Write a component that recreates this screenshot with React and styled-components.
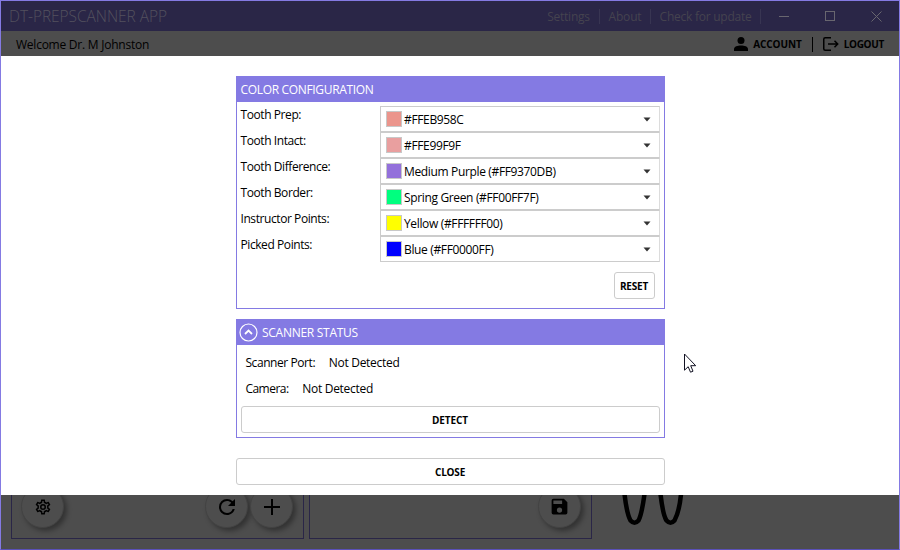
import React from "react";
import styled, { createGlobalStyle } from "styled-components";

const GlobalStyle = createGlobalStyle`
  * { box-sizing: border-box; }
  body { margin: 0; background: #fff; font-family: "Open Sans", "Noto Sans", sans-serif; font-size: 12px; color: #000; }
  svg { display: block; flex: none; }
`;

const Window = styled.div`
  position: relative;
  width: 900px;
  height: 550px;
  overflow: hidden;
  display: flex;
  flex-direction: column;
  border: 1px solid #847ae3;
  border-bottom-color: #5a50b8;
  background: #4d4d4d;
`;

const Label = styled.span`
  display: block;
  white-space: nowrap;
  line-height: 18px;
  letter-spacing: ${(p) => p.$ls || 0}px;
`;

const TitleBar = styled.header`
  flex: none;
  height: 30px;
  display: flex;
  align-items: center;
  background: #2a2647;
  color: #45434f;
`;

const AppTitle = styled.h1`
  margin: 0 auto 0 8px;
  font-weight: 300;
  font-size: 15.5px;
  line-height: 30px;
  letter-spacing: -0.05px;
  color: #53515e;
  white-space: nowrap;
`;

const TitleLink = styled.span`
  width: ${(p) => p.$w}px;
  height: 15px;
  line-height: 15px;
  text-align: center;
  border-right: 1px solid #383552;
  white-space: nowrap;
  letter-spacing: ${(p) => p.$ls}px;
`;

const WindowControls = styled.div`
  width: 138px;
  display: flex;
`;

const WindowControl = styled.span`
  width: 46px;
  display: flex;
  justify-content: center;
`;

const UserBar = styled.div`
  flex: none;
  height: 25px;
  display: flex;
  align-items: center;
  padding: 2px 15px 0;
`;

const UserName = styled(Label)`
  margin-right: auto;
`;

const UserAction = styled.div`
  display: flex;
  align-items: center;
  gap: 5px;
  height: 20px;
  margin-top: -1px;
  font-weight: 700;
  font-size: 10px;
`;

const ActionDivider = styled.span`
  width: 1px;
  height: 15px;
  margin: 0 10px 0 10px;
  background: #000;
`;

const Dialog = styled.main`
  flex: none;
  height: 439px;
  padding: 20px 0 0 235px;
  background: #fff;
`;

const Card = styled.section`
  width: 429px;
  height: ${(p) => p.$h}px;
  margin-bottom: ${(p) => p.$gap}px;
  border: 1px solid #847ae3;
`;

const CardHeader = styled.h2`
  display: flex;
  align-items: center;
  gap: 4px;
  height: 25px;
  margin: 0;
  padding-left: ${(p) => p.$pad}px;
  font-weight: 400;
  font-size: 12px;
  color: #fff;
  background: #847ae3;
`;

const SettingsList = styled.div`
  padding: 4px 4px 0 3px;
`;

const SettingRow = styled.div`
  display: flex;
  height: 26px;
`;

const SettingName = styled(Label)`
  width: 140px;
  padding-left: 0.5px;
`;

const Select = styled.div`
  width: 280px;
  height: 26px;
  display: flex;
  align-items: center;
  padding: 0 8px 0 5px;
  border: 1px solid #ccc;
  border-right-color: #dcdcdc;
`;

const Swatch = styled.span`
  width: 16px;
  height: 16px;
  margin-right: 2px;
  border: 1px solid #c8c8c8;
  background: ${(p) => p.$color};
`;

const SelectValue = styled(Label)`
  margin-right: auto;
  padding-top: 2px;
`;

const Button = styled.button`
  display: block;
  width: ${(p) => p.$w}px;
  height: 27px;
  padding: 0 1px 0 0;
  border: 1px solid #ccc;
  border-radius: 3px;
  background: #fff;
  color: #000;
  font: 700 10px/18px "Open Sans", "Noto Sans", sans-serif;
  letter-spacing: ${(p) => p.$ls}px;
`;

const ButtonRow = styled.div`
  display: flex;
  justify-content: flex-end;
  padding: 10px 5px 0 0;
`;

const StatusBody = styled.div`
  padding: 9px 4px 0;
`;

const StatusRow = styled.div`
  display: flex;
  gap: 13.5px;
  height: 26px;
  padding-left: 4.4px;
`;

const Workspace = styled.div`
  flex: 1;
  min-height: 0;
  overflow: hidden;
  display: flex;
  padding-left: 10px;
`;

const Panel = styled.div`
  width: ${(p) => p.$w}px;
  height: 44px;
  margin-right: ${(p) => p.$gap}px;
  padding: 0 9px;
  display: flex;
  border: 1px solid #2a2647;
  border-top: 0;
`;

const RoundButton = styled.div`
  flex: none;
  width: 43px;
  height: 43px;
  margin-top: -10px;
  margin-left: ${(p) => p.$ml};
  margin-right: ${(p) => p.$mr || 0};
  display: flex;
  align-items: center;
  justify-content: center;
  border: 1px solid #434343;
  border-radius: 50%;
  background: #4d4d4d;
  box-shadow: 3px 3px 5px rgba(0, 0, 0, 0.35);
`;

const Pointer = styled.svg`
  position: absolute;
  left: 682px;
  top: 352px;
`;

const colors = [
  { name: "Tooth Prep:", color: "#eb958c", value: "#FFEB958C" },
  { name: "Tooth Intact:", color: "#e99f9f", value: "#FFE99F9F" },
  { name: "Tooth Difference:", color: "#9370db", value: "Medium Purple (#FF9370DB)" },
  { name: "Tooth Border:", color: "#00ff7f", value: "Spring Green (#FF00FF7F)" },
  { name: "Instructor Points:", color: "#ffff00", value: "Yellow (#FFFFFF00)" },
  { name: "Picked Points:", color: "#0000ff", value: "Blue (#FF0000FF)" },
];

const MdiIcon = ({ size, d }) => (
  <svg width={size} height={size} viewBox="0 0 24 24"><path d={d} /></svg>
);

const COG = "M12 8a4 4 0 0 1 4 4 4 4 0 0 1-4 4 4 4 0 0 1-4-4 4 4 0 0 1 4-4m0 2a2 2 0 0 0-2 2 2 2 0 0 0 2 2 2 2 0 0 0 2-2 2 2 0 0 0-2-2m-2 12c-.25 0-.46-.18-.5-.42l-.37-2.65c-.63-.25-1.17-.59-1.69-.99l-2.49 1.01c-.22.08-.49 0-.61-.22l-2-3.46a.493.493 0 0 1 .12-.64l2.11-1.66L4.5 12l.07-1-2.11-1.63a.493.493 0 0 1-.12-.64l2-3.46c.12-.22.39-.31.61-.22l2.49 1c.52-.39 1.06-.73 1.69-.98l.37-2.65c.04-.24.25-.42.5-.42h4c.25 0 .46.18.5.42l.37 2.65c.63.25 1.17.59 1.69.98l2.49-1c.22-.09.49 0 .61.22l2 3.46c.13.22.07.49-.12.64L19.43 11l.07 1-.07 1 2.11 1.63c.19.15.25.42.12.64l-2 3.46c-.12.22-.39.31-.61.22l-2.49-1c-.52.39-1.06.73-1.69.98l-.37 2.65c-.04.24-.25.42-.5.42h-4m1.25-18-.37 2.61c-1.2.25-2.26.89-3.03 1.78L5.44 7.35l-.75 1.3L6.8 10.2a5.55 5.55 0 0 0 0 3.6l-2.12 1.56.75 1.3 2.43-1.04c.77.88 1.82 1.52 3.01 1.76l.37 2.62h1.52l.37-2.61c1.19-.25 2.24-.89 3.01-1.77l2.43 1.04.75-1.3-2.12-1.55c.4-1.17.4-2.44 0-3.61l2.11-1.55-.75-1.3-2.41 1.04a5.42 5.42 0 0 0-3.03-1.77L12.75 4h-1.5Z";
const REFRESH = "M17.65 6.35A7.958 7.958 0 0 0 12 4a8 8 0 0 0-8 8 8 8 0 0 0 8 8c3.73 0 6.84-2.55 7.73-6h-2.08A5.99 5.99 0 0 1 12 18a6 6 0 0 1-6-6 6 6 0 0 1 6-6c1.66 0 3.14.69 4.22 1.78L13 11h7V4l-2.35 2.35Z";
const SAVE = "M15 9H5V5h10m-3 14a3 3 0 0 1-3-3 3 3 0 0 1 3-3 3 3 0 0 1 3 3 3 3 0 0 1-3 3m5-16H5a2 2 0 0 0-2 2v14a2 2 0 0 0 2 2h14a2 2 0 0 0 2-2V7l-4-4Z";

export default function App() {
  return (
    <>
      <GlobalStyle />
      <Window>
        <TitleBar>
          <AppTitle>DT-PREPSCANNER APP</AppTitle>
          <TitleLink $w={62} $ls={-0.25}>Settings</TitleLink>
          <TitleLink $w={51} $ls={-0.2}>About</TitleLink>
          <TitleLink $w={110} $ls={-0.25}>Check for update</TitleLink>
          <WindowControls>
            <WindowControl><svg width="10" height="11"><path d="M0 5.5H10" stroke="#68666f" /></svg></WindowControl>
            <WindowControl><svg width="10" height="10"><rect x=".5" y=".5" width="9" height="9" fill="none" stroke="#68666f" /></svg></WindowControl>
            <WindowControl><svg width="11" height="11"><path d="M.5.5l10 10M10.5.5l-10 10" stroke="#68666f" /></svg></WindowControl>
          </WindowControls>
        </TitleBar>

        <UserBar>
          <UserName $ls={-0.24}>Welcome Dr. M Johnston</UserName>
          <UserAction>
            <svg width="14" height="14" viewBox="0 0 14 14"><circle cx="7" cy="3.5" r="3.5" /><path d="M0 14v-2C0 9.500 3.500 8.500 7 8.500s7 1 7 3.500v2z" /></svg>
            <Label $ls={-0.1}>ACCOUNT</Label>
          </UserAction>
          <ActionDivider />
          <UserAction>
            <svg width="16" height="14" viewBox="0 0 16 14" fill="none" stroke="#000" strokeWidth="1.500"><path d="M8 .75H2.200Q.75.75.75 2.200V11.800Q.75 13.250 2.200 13.250H8M5 7H14.500M11.500 3.800L14.700 7L11.500 10.200" /></svg>
            <Label $ls={-0.3}>LOGOUT</Label>
          </UserAction>
        </UserBar>

        <Dialog>
          <Card $h={233} $gap={10}>
            <CardHeader $pad={3.5}><Label $ls={-0.33}>COLOR CONFIGURATION</Label></CardHeader>
            <SettingsList>
              {colors.map((c) => (
                <SettingRow key={c.name}>
                  <SettingName $ls={-0.42}>{c.name}</SettingName>
                  <Select>
                    <Swatch $color={c.color} />
                    <SelectValue $ls={-0.35}>{c.value}</SelectValue>
                    <svg width="8" height="5"><path d="M.5.5H7.500L4 4.500Z" fill="#333" /></svg>
                  </Select>
                </SettingRow>
              ))}
              <ButtonRow><Button $w={41} $ls={-0.2}>RESET</Button></ButtonRow>
            </SettingsList>
          </Card>

          <Card $h={119} $gap={20}>
            <CardHeader $pad={2}>
              <svg width="19" height="19" viewBox="0 0 19 19" fill="none" stroke="#fff"><circle cx="9.500" cy="9.500" r="8.500" strokeWidth="1.200" /><path d="M6 11L9.500 7.500L13 11" strokeWidth="1.800" /></svg>
              <Label $ls={-0.28}>SCANNER STATUS</Label>
            </CardHeader>
            <StatusBody>
              <StatusRow><Label $ls={-0.42}>Scanner Port:</Label><Label $ls={-0.28}>Not Detected</Label></StatusRow>
              <StatusRow><Label $ls={-0.5}>Camera:</Label><Label $ls={-0.28}>Not Detected</Label></StatusRow>
              <Button $w={419} $ls={-0.1}>DETECT</Button>
            </StatusBody>
          </Card>
          <Button $w={429} $ls={-0.2}>CLOSE</Button>
        </Dialog>

        <Workspace>
          <Panel $w={293} $gap={5}>
            <RoundButton $ml="0px"><MdiIcon size={18} d={COG} /></RoundButton>
            <RoundButton $ml="auto"><MdiIcon size={24} d={REFRESH} /></RoundButton>
            <RoundButton $ml="2px" $mr="1px"><svg width="16" height="16"><path d="M8 0V16M0 8H16" stroke="#000" strokeWidth="2" /></svg></RoundButton>
          </Panel>
          <Panel $w={283} $gap={28}>
            <RoundButton $ml="auto" $mr="1.5px"><MdiIcon size={21} d={SAVE} /></RoundButton>
          </Panel>
          <svg width="66" height="34" viewBox="0 0 66 34" fill="none" stroke="#000" strokeWidth="4.5"><path d="M4.500 -1C6 12 8 21 10.500 25.500Q14.500 30 18.500 25.500C21.500 20 23 10 24.500 -1M40.500 -1C42 12 43.500 21 46.500 25.500Q50.500 30 54.500 25.500C58 19 60 10 61 -1" /></svg>
        </Workspace>

        <Pointer width="14" height="22" viewBox="0 0 14 22"><path d="M1.500 1V17.200L5.200 13.700L7.500 19.200L10 18.200L7.700 12.700H12.700Z" fill="#fff" stroke="#111122" /></Pointer>
      </Window>
    </>
  );
}
